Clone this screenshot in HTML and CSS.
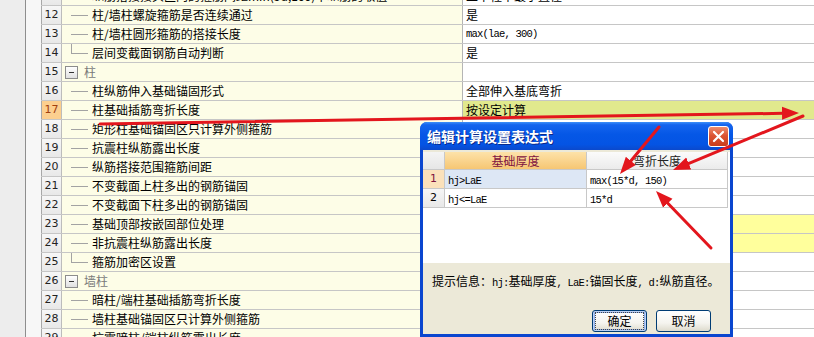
FILE: index.html
```html
<!DOCTYPE html>
<html lang="zh-CN">
<head>
<meta charset="utf-8">
<title>计算设置</title>
<link rel="stylesheet" href="styles.css">
</head>
<body>
<div class="page">
  <div class="gutter"></div>
  <div class="pad"></div>
  <div class="grid">
    <div class="row"><div class="num">11</div><div class="name"><span class="tree"></span><span>纵筋搭接接头区内的箍筋间距min(5d,100)中纵筋的取值</span></div><div class="val">上下柱中最小直径</div></div>
    <div class="row"><div class="num">12</div><div class="name"><span class="tree"></span><span>柱/墙柱螺旋箍筋是否连续通过</span></div><div class="val">是</div></div>
    <div class="row"><div class="num">13</div><div class="name"><span class="tree"></span><span>柱/墙柱圆形箍筋的搭接长度</span></div><div class="val"><span class="m">max(lae, 300)</span></div></div>
    <div class="row"><div class="num">14</div><div class="name"><span class="tree last"></span><span>层间变截面钢筋自动判断</span></div><div class="val">是</div></div>
    <div class="row"><div class="num">15</div><div class="name"><span class="toggle"></span><span class="glabel">柱</span></div><div class="val"></div></div>
    <div class="row"><div class="num">16</div><div class="name"><span class="tree"></span><span>柱纵筋伸入基础锚固形式</span></div><div class="val">全部伸入基底弯折</div></div>
    <div class="row sel"><div class="num">17</div><div class="name"><span class="tree"></span><span>柱基础插筋弯折长度</span></div><div class="val">按设定计算</div></div>
    <div class="row"><div class="num">18</div><div class="name"><span class="tree"></span><span>矩形柱基础锚固区只计算外侧箍筋</span></div><div class="val"></div></div>
    <div class="row"><div class="num">19</div><div class="name"><span class="tree"></span><span>抗震柱纵筋露出长度</span></div><div class="val"></div></div>
    <div class="row"><div class="num">20</div><div class="name"><span class="tree"></span><span>纵筋搭接范围箍筋间距</span></div><div class="val"></div></div>
    <div class="row"><div class="num">21</div><div class="name"><span class="tree"></span><span>不变截面上柱多出的钢筋锚固</span></div><div class="val"></div></div>
    <div class="row"><div class="num">22</div><div class="name"><span class="tree"></span><span>不变截面下柱多出的钢筋锚固</span></div><div class="val"></div></div>
    <div class="row"><div class="num">23</div><div class="name"><span class="tree"></span><span>基础顶部按嵌固部位处理</span></div><div class="val yel"></div></div>
    <div class="row"><div class="num">24</div><div class="name"><span class="tree"></span><span>非抗震柱纵筋露出长度</span></div><div class="val yel"></div></div>
    <div class="row"><div class="num">25</div><div class="name"><span class="tree last"></span><span>箍筋加密区设置</span></div><div class="val"></div></div>
    <div class="row"><div class="num">26</div><div class="name"><span class="toggle"></span><span class="glabel">墙柱</span></div><div class="val"></div></div>
    <div class="row"><div class="num">27</div><div class="name"><span class="tree"></span><span>暗柱/端柱基础插筋弯折长度</span></div><div class="val"></div></div>
    <div class="row"><div class="num">28</div><div class="name"><span class="tree"></span><span>墙柱基础锚固区只计算外侧箍筋</span></div><div class="val"></div></div>
    <div class="row"><div class="num">29</div><div class="name"><span class="tree"></span><span>抗震暗柱/端柱纵筋露出长度</span></div><div class="val"></div></div>
  </div>
</div>

<div class="dialog">
  <div class="titlebar">
    <span class="title">编辑计算设置表达式</span>
    <span class="close"><svg width="13" height="13" viewBox="0 0 13 13"><path d="M2 2 L11 11 M11 2 L2 11" stroke="#fff" stroke-width="2.2" stroke-linecap="round"/></svg></span>
  </div>
  <div class="body">
    <div class="panel">
      <div class="dgrid">
        <div class="dh corner"></div>
        <div class="dh hl">基础厚度</div>
        <div class="dh">弯折长度</div>
        <div class="dn cur">1</div>
        <div class="dc curcell"><span class="m">hj&gt;LaE</span></div>
        <div class="dc"><span class="m">max(15*d, 150)</span></div>
        <div class="dn">2</div>
        <div class="dc"><span class="m">hj&lt;=LaE</span></div>
        <div class="dc"><span class="m">15*d</span></div>
      </div>
    </div>
    <div class="info">提示信息：<span class="m">hj:</span>基础厚度<span class="m">, LaE:</span>锚固长度<span class="m">, d:</span>纵筋直径。</div>
    <div class="buttons">
      <span class="btn default"><span class="focus">确定</span></span>
      <span class="btn">取消</span>
    </div>
  </div>
</div>

<svg class="arrows" width="814" height="337" viewBox="0 0 814 337">
  <defs>
    <marker id="ah" markerUnits="userSpaceOnUse" viewBox="0 -7 17 14" markerWidth="17" markerHeight="14" refX="1" refY="0" orient="auto">
      <path d="M0,-6.5 L17,0 L0,6.5 z" fill="#e3161d"/>
    </marker>
  </defs>
  <g stroke="#e3161d" stroke-width="3" stroke-linecap="round" fill="none" marker-end="url(#ah)">
    <line x1="100" y1="124" x2="783" y2="113.3"/>
    <line x1="803" y1="116" x2="687.8" y2="163.9"/>
    <line x1="659" y1="127" x2="630.2" y2="161.7"/>
    <line x1="711" y1="248" x2="667.1" y2="202.5"/>
  </g>
</svg>
</body>
</html>
```

FILE: styles.css
```css
html, body {
  margin: 0;
  padding: 0;
}
body {
  width: 814px;
  height: 337px;
  overflow: hidden;
  position: relative;
  background: #fff;
  font-family: "Noto Sans CJK SC", "Noto Sans", sans-serif;
  font-size: 12px;
  color: #000;
}

.page {
  display: flex;
  height: 337px;
}
.gutter {
  flex: none;
  width: 25px;
  background: #ededed;
  border-right: 1px solid #8e8e8e;
}
.pad {
  flex: none;
  width: 15px;
  background: #f7f7f7;
}
.grid {
  flex: 1;
  margin-top: -13px;
  display: flex;
  flex-direction: column;
  min-width: 0;
}
.row {
  flex: none;
  display: grid;
  grid-template-columns: 21px 401px 1fr;
  height: 19px;
  box-sizing: border-box;
  border-bottom: 1px solid #c6c6c6;
}
.num {
  box-sizing: border-box;
  border-left: 1px solid #a8a8a8;
  border-right: 1px solid #bcbcbc;
  background: linear-gradient(#f7f7f7, #e8e8e8);
  text-align: center;
  line-height: 18px;
  font-family: "DejaVu Sans", sans-serif;
  font-size: 11px;
  color: #222;
}
.name {
  box-sizing: border-box;
  background: #fdfde7;
  border-right: 1px solid #b5b5b5;
  display: flex;
  align-items: center;
  white-space: nowrap;
  overflow: hidden;
  line-height: 18px;
}
.val {
  background: #fff;
  padding-left: 3px;
  display: flex;
  align-items: center;
  white-space: nowrap;
  overflow: hidden;
  line-height: 18px;
}
.tree {
  flex: none;
  width: 21px;
  height: 100%;
  margin-left: 9px;
  background: linear-gradient(#a3a3a3, #a3a3a3) 0 50% / 17px 1px no-repeat;
}
.tree.last {
  background:
    linear-gradient(#a3a3a3, #a3a3a3) 0 50% / 17px 1px no-repeat,
    linear-gradient(#a3a3a3, #a3a3a3) 0 0 / 1px 50% no-repeat;
}
.toggle {
  flex: none;
  width: 11px;
  height: 11px;
  margin-left: 3px;
  border: 1px solid #8c8c8c;
  background:
    linear-gradient(#333, #333) center / 5px 1px no-repeat,
    linear-gradient(#ffffff, #e0e0e0);
}
.glabel {
  margin-left: 6px;
  color: #7a7a7a;
}
.row.sel .num {
  background: #fccf8f;
  color: #a0400f;
}
.row.sel .val {
  background: #e1e98d;
}
.val.yel {
  background: #ffff9c;
}
.m {
  font-family: "Liberation Mono", monospace;
  font-size: 10.5px;
  letter-spacing: -0.8px;
}

/* dialog window */
.dialog {
  position: absolute;
  left: 420px;
  top: 122px;
  width: 313px;
  height: 215px;
  box-sizing: border-box;
  padding: 0 3px 3px;
  background: #0a46cf;
  border-radius: 7px 7px 0 0;
  display: flex;
  flex-direction: column;
  z-index: 2;
}
.titlebar {
  flex: none;
  height: 28px;
  margin: 0 -3px;
  padding: 0 4px 0 7px;
  border-radius: 7px 7px 0 0;
  background: linear-gradient(#3d8ff8 0%, #1464ee 10%, #0557e6 45%, #0454e4 80%, #0b49cc 100%);
  display: flex;
  align-items: center;
  justify-content: space-between;
}
.title {
  color: #fff;
  font-weight: bold;
  font-size: 14px;
  text-shadow: 1px 1px 0 #0b2a8c;
}
.close {
  width: 21px;
  height: 21px;
  box-sizing: border-box;
  border: 1px solid #fff;
  border-radius: 3px;
  background: linear-gradient(#ec8d6f, #dc5433 45%, #c93c1a);
  display: flex;
  align-items: center;
  justify-content: center;
}
.body {
  flex: 1;
  background: #ece9d8;
  padding-top: 2px;
  display: flex;
  flex-direction: column;
}
.panel {
  flex: none;
  height: 111px;
  background: #fff;
}
.dgrid {
  display: grid;
  grid-template-columns: 22px 142px 141px;
  grid-template-rows: 18px 19px 19px;
}
.dh, .dn, .dc {
  box-sizing: border-box;
  border-right: 1px solid #c8c8c8;
  border-bottom: 1px solid #c8c8c8;
  line-height: 18px;
  white-space: nowrap;
  overflow: hidden;
}
.dh {
  text-align: center;
  background: linear-gradient(#fbfbfb, #ebebeb);
  color: #222;
}
.dh.corner {
  background: linear-gradient(#f4f4f4, #e6e6e6);
}
.dh.hl {
  background: linear-gradient(#fde2a9, #f6c673);
  color: #7e1240;
}
.dn {
  text-align: center;
  background: linear-gradient(#f6f6f6, #e8e8e8);
  font-family: "DejaVu Sans", sans-serif;
  font-size: 11px;
}
.dn.cur {
  background: #fbe1bb;
  color: #7e1240;
}
.dc {
  padding-left: 3px;
  background: #fff;
}
.dc.curcell {
  background: #dde7f5;
}
.info {
  padding: 9px 0 0 9px;
  line-height: 18px;
  white-space: nowrap;
}
.buttons {
  margin-top: 18px;
  padding-right: 19px;
  display: flex;
  justify-content: flex-end;
  gap: 9px;
}
.btn {
  width: 55px;
  height: 22px;
  box-sizing: border-box;
  border: 1px solid #003c74;
  border-radius: 3px;
  background: linear-gradient(#ffffff, #f5f4ef 60%, #dedbcd);
  display: flex;
  align-items: center;
  justify-content: center;
  line-height: 14px;
}
.btn.default {
  box-shadow: inset 0 0 0 1px #bcd0f3, inset 0 0 0 2px #8fb0ea;
}
.focus {
  border: 1px dotted #444;
  padding: 1px 11px;
}

.arrows {
  position: absolute;
  left: 0;
  top: 0;
  z-index: 3;
  pointer-events: none;
}
```
